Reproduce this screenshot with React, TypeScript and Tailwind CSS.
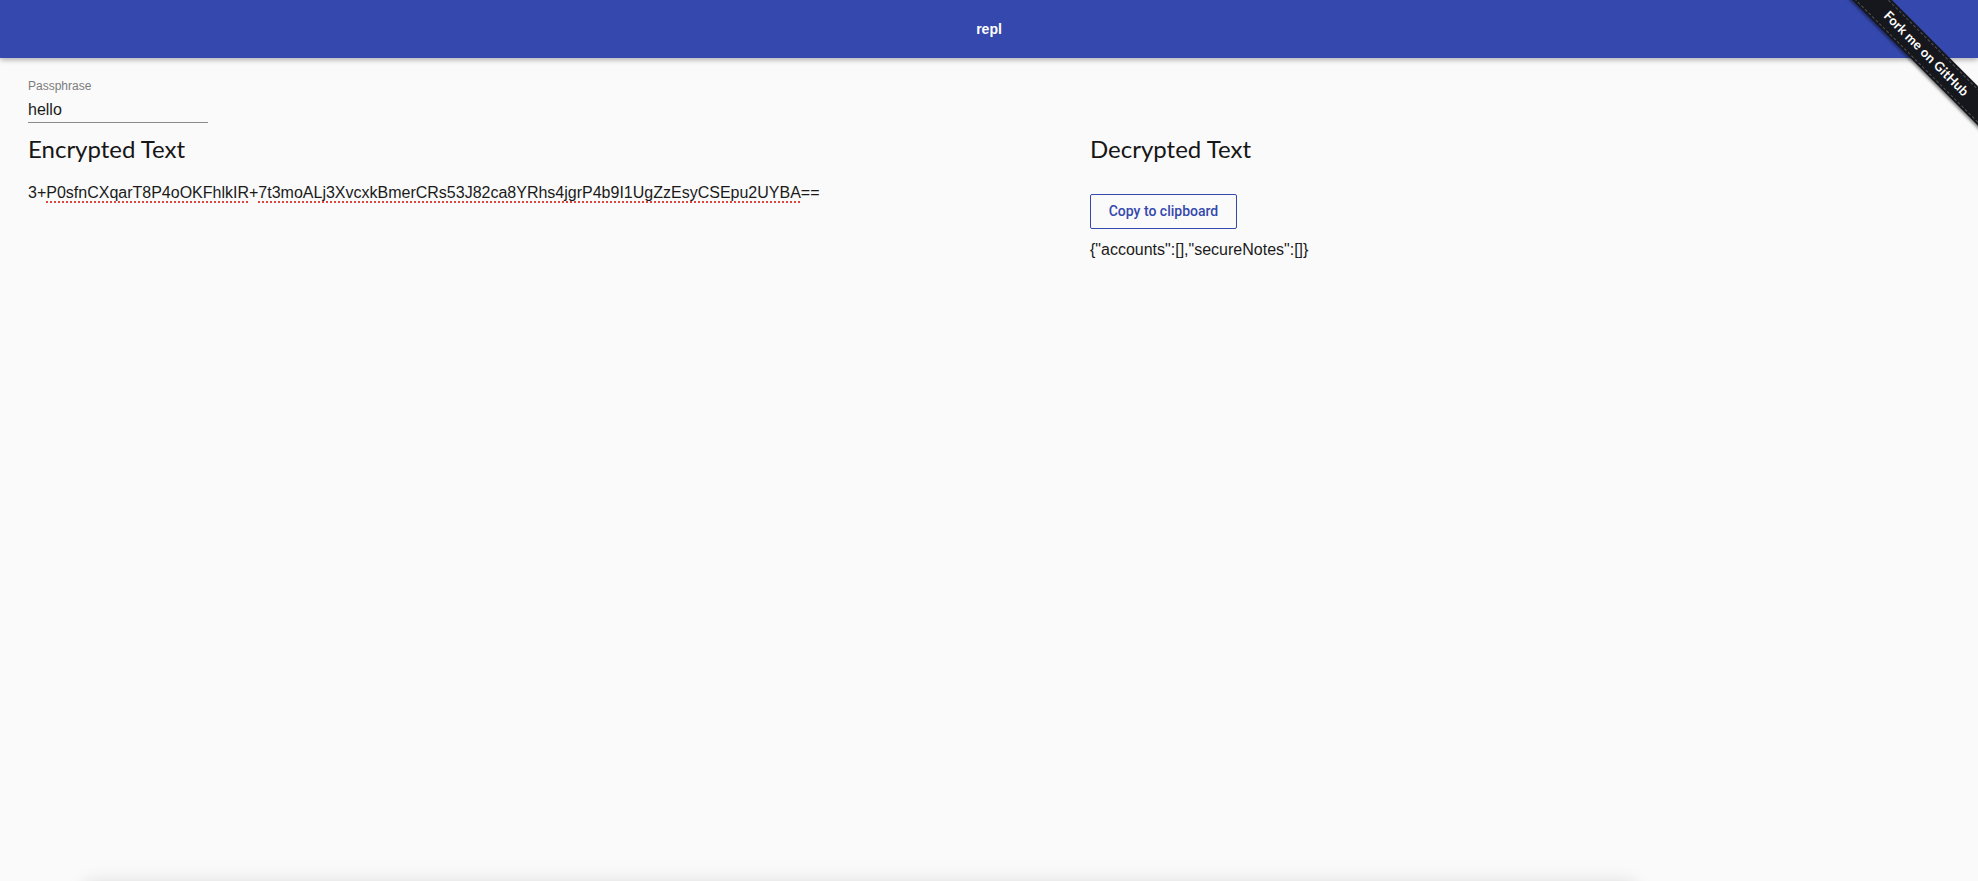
import { FunctionComponent } from "react";

const spell =
  "underline decoration-dotted decoration-[#e0453a] decoration-[1.5px] underline-offset-[3px]";

const ForkRibbon: FunctionComponent = () => {
  return (
    <div className="absolute z-20 top-0 right-0 w-[160px] h-[160px] overflow-hidden pointer-events-none">
      <a
        href="#"
        className="absolute left-[8px] top-[40px] w-[200px] h-[28px] rotate-45 bg-[#16171d] shadow-[0_2px_3px_rgba(0,0,0,0.45)] flex items-center justify-center"
      >
        <div className="absolute inset-x-0 top-[2px] border-t border-dashed border-[rgba(255,255,255,0.25)]" />
        <div className="absolute inset-x-0 bottom-[2px] border-b border-dashed border-[rgba(255,255,255,0.25)]" />
        <span className="text-white text-[13px] font-bold font-['Lato',sans-serif] tracking-[0.2px]">
          Fork me on GitHub
        </span>
      </a>
    </div>
  );
};

export default function App() {
  return (
    <div className="relative w-full h-[881px] overflow-hidden bg-[#fafafa] font-['Liberation_Sans',Arial,sans-serif] text-[#1a1a1a]">
      <header className="relative z-10 h-[58px] bg-[#3548ad] shadow-[0_2px_5px_rgba(0,0,0,0.3)] flex items-center justify-center">
        <span className="text-white text-[14px] font-bold">repl</span>
      </header>

      <main className="px-[28px] pt-[21px]">
        <div className="flex flex-col w-[180px]">
          <label className="text-[12px] leading-[14px] text-[#7c7c7c]">Passphrase</label>
          <input
            readOnly
            value="hello"
            className="h-[30px] pt-[5px] pb-0 px-0 bg-transparent outline-none border-b border-[#8a8a8a] text-[16px] text-[#1a1a1a]"
          />
        </div>

        <div className="flex flex-row mt-[11px]">
          <section className="w-[1062px] shrink-0">
            <h2 className="font-['Lato',sans-serif] text-[24px] leading-[29px] text-[#161616]">
              Encrypted Text
            </h2>
            <p className="mt-[18px] text-[16px] text-[#1a1a1a]">
              3+<span className={spell}>P0sfnCXqarT8P4oOKFhlkIR</span>+
              <span className={spell}>
                7t3moALj3XvcxkBmerCRs53J82ca8YRhs4jgrP4b9I1UgZzEsyCSEpu2UYBA
              </span>
              ==
            </p>
          </section>

          <section className="flex-1">
            <h2 className="font-['Lato',sans-serif] text-[24px] leading-[29px] text-[#161616]">
              Decrypted Text
            </h2>
            <button className="mt-[31px] h-[35px] w-[147px] border border-[#3548ad] rounded-[2px] bg-transparent text-[#3548ad] text-[14px] font-medium font-['Roboto',sans-serif] flex items-center justify-center">
              Copy to clipboard
            </button>
            <p className="mt-[9px] text-[16px] text-[#1a1a1a]">
              {'{"accounts":[],"secureNotes":[]}'}
            </p>
          </section>
        </div>
      </main>

      <ForkRibbon />

      <div className="absolute left-[84px] bottom-[-52px] w-[1552px] h-[48px] bg-[#fafafa] rounded-[4px] shadow-[0_-2px_18px_rgba(0,0,0,0.14)]" />
    </div>
  );
}
